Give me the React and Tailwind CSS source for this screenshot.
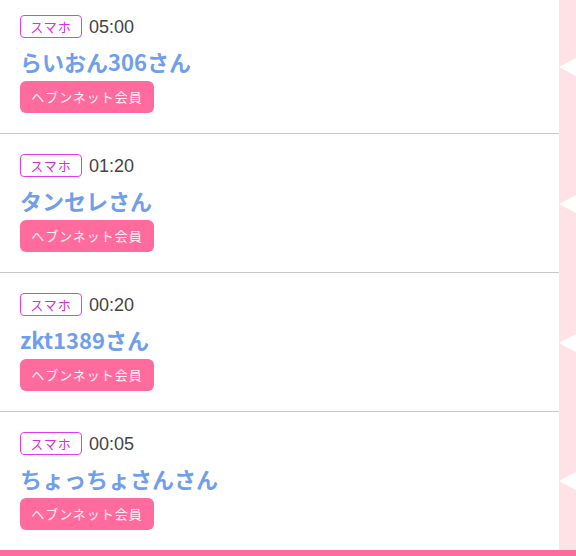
const rows = [
  { time: "05:00", name: "らいおん306さん" },
  { time: "01:20", name: "タンセレさん" },
  { time: "00:20", name: "zkt1389さん" },
  { time: "00:05", name: "ちょっちょさんさん" },
];

const font = { fontFamily: '"Noto Sans CJK JP", "Noto Sans", sans-serif' };

const Row = ({ time, name, first, last }) => (
  <div className="flex">
    <div
      className={`flex-1 px-5 pb-5 ${first ? "pt-[15px]" : "pt-5"} ${
        last ? "" : "border-b border-[#c8c8c8]"
      }`}
    >
      <div className="flex items-center h-[23px]">
        <span className="w-[62px] h-[23px] flex items-center justify-center rounded-[4px] border border-[#e23cf0] text-[#d62ee0] text-[13px] tracking-[1px] leading-none">
          スマホ
        </span>
        <span
          className="ml-[7px] text-[18px] text-[#444] leading-none"
          style={{ fontFamily: '"Liberation Sans", Arial, sans-serif' }}
        >
          {time}
        </span>
      </div>
      <div className="mt-[8px] text-[22px] font-bold text-[#6f9eec] leading-[31px]">
        {name}
      </div>
      <div className="mt-[4px] w-[134px] h-[32px] rounded-[6px] bg-[#ff6b9d] text-white/90 text-[13px] tracking-[1px] flex items-center justify-center">
        ヘブンネット会員
      </div>
    </div>
    <div className="w-[17px] bg-[#ffe2e6] flex items-center justify-end">
      <div className="w-0 h-0 border-y-[9px] border-y-transparent border-r-[17px] border-r-white" />
    </div>
  </div>
);

export default function App() {
  return (
    <div className="w-[576px] h-[556px] bg-white overflow-hidden flex flex-col" style={font}>
      {rows.map((r, i) => (
        <Row key={i} {...r} first={i === 0} last={i === rows.length - 1} />
      ))}
      <div className="flex flex-1">
        <div className="flex-1" />
        <div className="w-[17px] bg-[#ffe2e6]" />
      </div>
      <div className="h-[7px] bg-[#ff6b9d]" />
    </div>
  );
}
